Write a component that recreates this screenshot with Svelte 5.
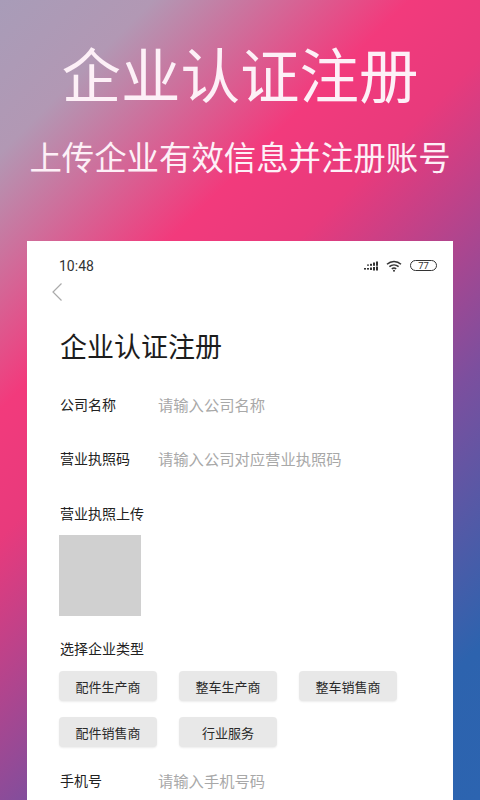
<script lang="ts">
	const types = ['配件生产商', '整车生产商', '整车销售商', '配件销售商', '行业服务'];
</script>

<div class="page">
	<header class="hero">
		<h1>企业认证注册</h1>
		<p>上传企业有效信息并注册账号</p>
	</header>

	<main class="card">
		<div class="status">
			<span class="time">10:48</span>
			<div class="status-icons">
				<svg width="14" height="10" viewBox="0 0 14 10" fill="#333">
					<rect x="0" y="7" width="2" height="1.600" />
					<rect x="3" y="7" width="2" height="1.600" />
					<rect x="6" y="6.500" width="2" height="2.500" />
					<rect x="9" y="6" width="2" height="3.500" />
					<rect x="12" y="5.500" width="2" height="4" />
					<rect x="3" y="3.500" width="2" height="1.200" />
					<rect x="6" y="2.800" width="2" height="2" />
					<rect x="9" y="1.500" width="2" height="3.300" />
					<rect x="12" y="0.500" width="2" height="4.300" />
				</svg>
				<svg width="16" height="12" viewBox="0 0 16 12" fill="none" stroke="#333" stroke-width="1.500">
					<path d="M1 4.200C5 .6 11 .6 15 4.200" />
					<path d="M3.400 6.600c2.700-2.300 6.500-2.300 9.200 0" />
					<path d="M5.800 8.800c1.300-1 3.100-1 4.400 0" />
					<circle cx="8" cy="10.800" r="1" fill="#333" stroke="none" />
				</svg>
				<span class="battery">77</span>
			</div>
		</div>

		<svg class="back" width="12" height="20" viewBox="0 0 12 20" fill="none" stroke="#aaa" stroke-width="1.200">
			<path d="M10.500 1.500 2 10l8.500 8.500" />
		</svg>

		<h2>企业认证注册</h2>

		<div class="field first">
			<span class="label">公司名称</span>
			<span class="placeholder">请输入公司名称</span>
		</div>
		<div class="field">
			<span class="label">营业执照码</span>
			<span class="placeholder">请输入公司对应营业执照码</span>
		</div>

		<div class="label upload-label">营业执照上传</div>
		<div class="upload"></div>

		<div class="label type-label">选择企业类型</div>
		<div class="chips">
			{#each types as type}
				<span class="chip">{type}</span>
			{/each}
		</div>

		<div class="field phone">
			<span class="label">手机号</span>
			<span class="placeholder">请输入手机号码</span>
		</div>
	</main>
</div>

<style>
	:global(body) {
		margin: 0;
	}

	.page {
		width: 480px;
		height: 800px;
		overflow: hidden;
		display: flex;
		flex-direction: column;
		align-items: center;
		background: linear-gradient(135deg, #a89cb8 0%, #b298b4 12%, #f23a7c 32%, #e83a7c 42%, #7c4f9e 66%, #2d63ae 88%, #2c64b0 100%);
		font-family: "Noto Sans CJK SC", "Noto Sans", sans-serif;
	}

	.hero {
		height: 241px;
		flex: none;
		color: #fdf0f7;
		text-align: center;
	}

	h1 {
		margin: 28px 0 0;
		font-size: 59.500px;
		line-height: 88px;
		font-weight: 400;
	}

	.hero p {
		margin: 18px 0 0;
		font-size: 32.400px;
		line-height: 44px;
		font-weight: 400;
		white-space: nowrap;
	}

	.card {
		width: 426px;
		flex: 1;
		box-sizing: border-box;
		padding: 0 33px;
		background: #fff;
		color: #222;
	}

	.status {
		height: 49px;
		margin-right: -17px;
		display: flex;
		align-items: center;
		justify-content: space-between;
		box-sizing: border-box;
		margin-left: -1px;
	}

	.time {
		font-family: Roboto, sans-serif;
		font-size: 14px;
		color: #333;
	}

	.status-icons {
		display: flex;
		align-items: center;
		gap: 8px;
	}

	.battery {
		width: 27px;
		height: 11px;
		box-sizing: border-box;
		border: 1px solid #333;
		border-radius: 6px;
		font-family: Roboto, sans-serif;
		font-size: 9.500px;
		line-height: 9px;
		text-align: center;
		color: #333;
	}

	.back {
		display: block;
		margin: -8px 0 0 -9px;
	}

	h2 {
		margin: 24px 0 0;
		font-size: 27px;
		line-height: 40px;
		font-weight: 400;
		color: #1c1c1c;
	}

	.field {
		display: flex;
		align-items: center;
		height: 24px;
		margin-top: 30px;
	}

	.field.first {
		margin-top: 26px;
	}

	.label {
		font-size: 14px;
		line-height: 20px;
		color: #222;
	}

	.field .label {
		width: 99px;
		margin-right: -1px;
		flex: none;
	}

	.placeholder {
		font-size: 15.300px;
		color: #a8a8a8;
	}

	.upload-label {
		margin-top: 33px;
	}

	.upload {
		width: 82px;
		height: 81px;
		margin: 12px 0 0 -1px;
		background: #d0d0d0;
	}

	.type-label {
		margin-top: 22px;
	}

	.chips {
		display: grid;
		grid-template-columns: repeat(3, 98px);
		column-gap: 22px;
		row-gap: 16px;
		margin: 13px 0 0 -1px;
	}

	.chip {
		height: 30px;
		border-radius: 4px;
		background: #e8e8e8;
		box-shadow: 0 1px 2px rgba(0, 0, 0, 0.08);
		display: flex;
		align-items: center;
		justify-content: center;
		font-size: 13px;
		color: #2a2a2a;
	}

	.field.phone {
		margin-top: 21px;
	}
</style>
